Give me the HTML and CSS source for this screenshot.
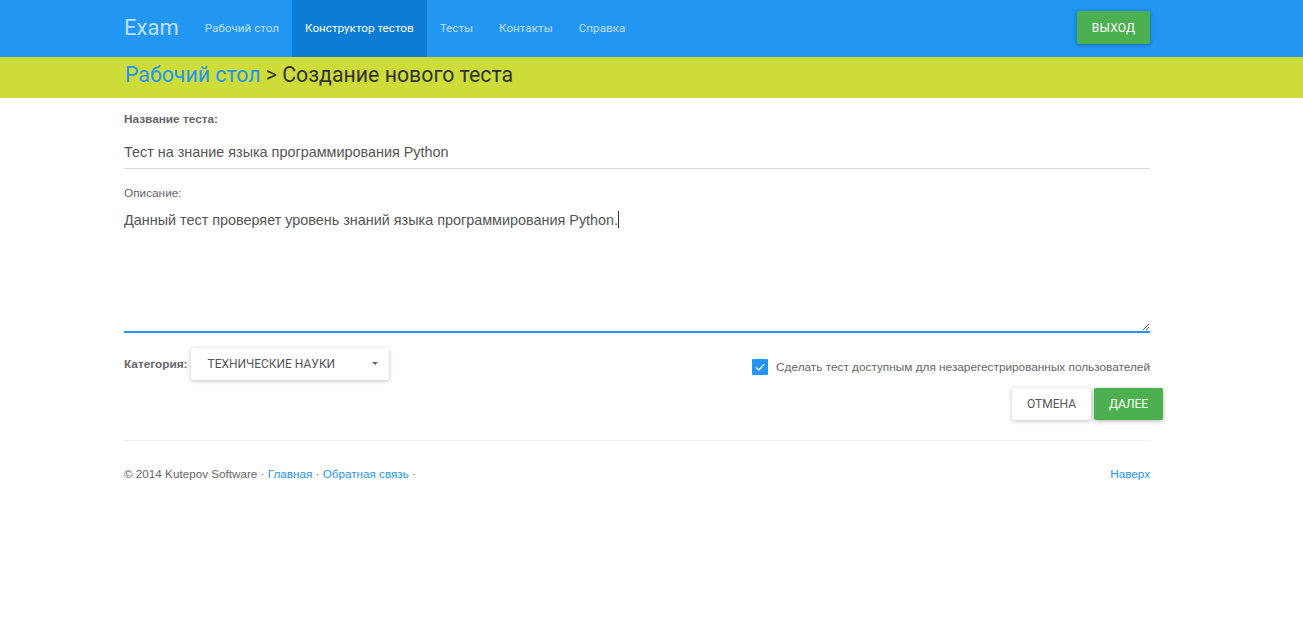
FILE: index.html
```html
<!DOCTYPE html>
<html lang="ru">
<head>
<meta charset="utf-8">
<title>Exam</title>
<link rel="stylesheet" href="styles.css">
</head>
<body>
<header class="navbar">
  <div class="wrap navbar-inner">
    <a class="brand" href="#">Exam</a>
    <nav class="nav">
      <a class="nav-item" href="#">Рабочий стол</a>
      <a class="nav-item active" href="#">Конструктор тестов</a>
      <a class="nav-item" href="#">Тесты</a>
      <a class="nav-item" href="#">Контакты</a>
      <a class="nav-item" href="#">Справка</a>
    </nav>
    <a class="btn btn-green btn-exit" href="#">Выход</a>
  </div>
</header>
<div class="crumbbar">
  <div class="wrap crumbs"><a href="#">Рабочий стол</a> &gt; Создание нового теста</div>
</div>
<main class="wrap main">
  <label class="label-bold">Название теста:</label>
  <div class="input">Тест на знание языка программирования Python</div>
  <label class="label">Описание:</label>
  <div class="textarea">Данный тест проверяет уровень знаний языка программирования Python.<span class="caret-cursor"></span>
    <svg class="grip" width="8" height="8" viewBox="0 0 8 8"><path d="M7 1 L1 7 M7 4 L4 7" stroke="#666" stroke-width="1"/></svg>
  </div>
  <div class="row-options">
    <div class="category">
      <span class="label-bold">Категория:</span>
      <div class="dropdown">Технические науки<span class="dd-caret"></span></div>
    </div>
    <div class="check">
      <span class="box"><svg width="16" height="16" viewBox="0 0 16 16"><path d="M4 8.2 L6.8 11 L12.2 5.4" fill="none" stroke="#fff" stroke-width="1.3"/></svg></span>
      <span>Сделать тест доступным для незарегестрированных пользователей</span>
    </div>
  </div>
  <div class="actions">
    <a class="btn btn-white" href="#">Отмена</a>
    <a class="btn btn-green" href="#">Далее</a>
  </div>
  <hr class="sep">
  <footer class="footer">
    <div>© 2014 Kutepov Software · <a href="#">Главная</a> · <a href="#">Обратная связь</a> ·</div>
    <a href="#">Наверх</a>
  </footer>
</main>
</body>
</html>
```
FILE: styles.css
```css
* { box-sizing: border-box; }
body {
  margin: 0;
  font-family: "Liberation Sans", Arial, sans-serif;
  color: #666;
  background: #fff;
}
a { text-decoration: none; }
.wrap {
  width: 1026px;
  margin-left: 124px;
}
.navbar {
  background: #2196f3;
  height: 57px;
}
.navbar-inner {
  display: flex;
  align-items: stretch;
  height: 57px;
}
.brand {
  font-family: Roboto, sans-serif;
  font-size: 22px;
  color: rgba(255,255,255,0.72);
  line-height: 55px;
  margin-right: 13px;
}
.nav { display: flex; }
.nav-item {
  color: rgba(255,255,255,0.72);
  font-size: 11.7px;
  padding: 0 13px;
  line-height: 56px;
  font-family: Roboto, sans-serif;
}
.nav-item.active {
  background: #0c7cd5;
  color: #fff;
}
.btn {
  display: inline-flex;
  align-items: center;
  justify-content: center;
  font-size: 12px;
  text-transform: uppercase;
  border-radius: 2px;
  font-family: Roboto, sans-serif;
}
.btn-green {
  background: #4caf50;
  color: #fff;
  box-shadow: 0 1px 4px rgba(0,0,0,0.3);
}
.btn-exit {
  margin-left: auto;
  align-self: flex-start;
  margin-top: 11px;
  width: 73px;
  height: 33px;
  letter-spacing: 0.2px;
}
.crumbbar {
  background: #cddc39;
  height: 41px;
}
.crumbs {
  font-family: Roboto, sans-serif;
  font-size: 21.3px;
  line-height: 36px;
  color: #333;
  padding-left: 1px;
}
.crumbs a { color: #2196f3; }
.main { padding-top: 14px; }
.label-bold {
  display: block;
  font-weight: bold;
  font-size: 11.8px;
  color: #666;
}
.label {
  display: block;
  font-size: 11.8px;
  color: #666;
  margin-top: 17px;
}
.input {
  font-size: 14.4px;
  color: #555;
  padding: 18px 0 8px;
  border-bottom: 1px solid #ddd;
}
.textarea {
  position: relative;
  font-size: 14.4px;
  color: #555;
  padding-top: 11px;
  height: 133px;
  border-bottom: 2px solid #2196f3;
}
.caret-cursor {
  display: inline-block;
  width: 1px;
  height: 17px;
  background: #333;
  vertical-align: -3px;
}
.grip {
  position: absolute;
  right: 0;
  bottom: 0;
}
.row-options {
  display: flex;
  justify-content: space-between;
  align-items: flex-start;
  margin-top: 15px;
}
.category {
  display: flex;
  align-items: center;
  gap: 4px;
}
.dropdown {
  position: relative;
  width: 198px;
  height: 32px;
  display: flex;
  align-items: center;
  padding-left: 16px;
  font-size: 12px;
  text-transform: uppercase;
  color: #555;
  background: #fff;
  box-shadow: 0 1px 4px rgba(0,0,0,0.25);
  border-radius: 2px;
  font-family: Roboto, sans-serif;
}
.dd-caret {
  position: absolute;
  right: 11px;
  top: 14px;
  border-left: 3px solid transparent;
  border-right: 3px solid transparent;
  border-top: 3px solid #666;
}
.check {
  display: flex;
  align-items: center;
  gap: 8px;
  font-size: 11.8px;
  margin-top: 11px;
  color: #666;
}
.box {
  width: 16px;
  height: 16px;
  background: #2196f3;
  border-radius: 1px;
  display: flex;
}
.actions {
  display: flex;
  justify-content: flex-end;
  gap: 3px;
  margin-top: 8px;
  margin-right: -13px;
}
.btn-white {
  background: #fff;
  color: #555;
  width: 79px;
  height: 32px;
  box-shadow: 0 1px 4px rgba(0,0,0,0.25);
  font-size: 12px;
}
.actions .btn-green {
  width: 69px;
  height: 32px;
}
.sep {
  border: 0;
  border-top: 1px solid #eee;
  margin: 20px 0 0;
}
.footer {
  display: flex;
  justify-content: space-between;
  font-size: 11.7px;
  margin-top: 26px;
  color: #666;
}
.footer a { color: #2196f3; }
```
